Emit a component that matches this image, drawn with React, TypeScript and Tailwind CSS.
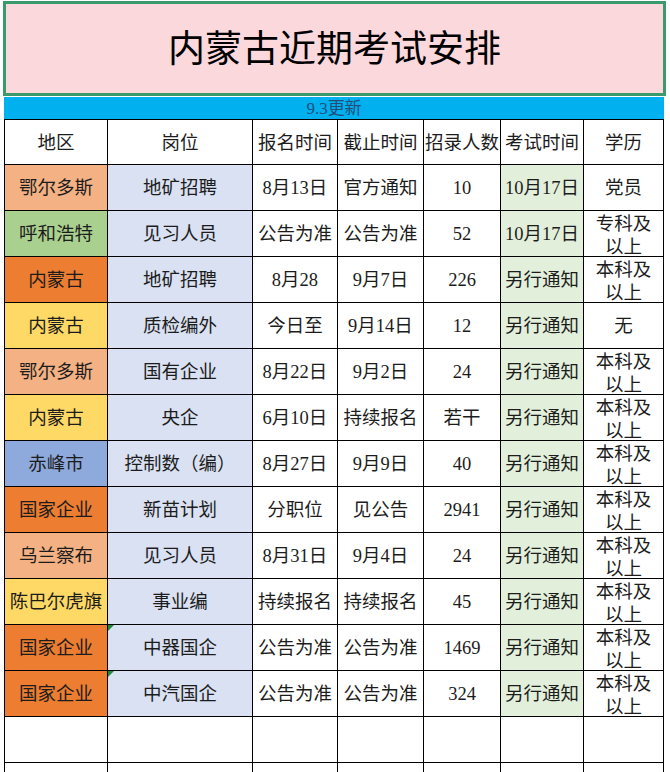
import React from 'react'

type Row = {
  region: string
  regionBg: string
  post: string
  start: string
  end: string
  count: string
  exam: string
  edu: string
  mark?: boolean
}

const rows: Row[] = [
  { region: '鄂尔多斯', regionBg: 'bg-[#f4b183]', post: '地矿招聘', start: '8月13日', end: '官方通知', count: '10', exam: '10月17日', edu: '党员' },
  { region: '呼和浩特', regionBg: 'bg-[#a9d08e]', post: '见习人员', start: '公告为准', end: '公告为准', count: '52', exam: '10月17日', edu: '专科及\n以上' },
  { region: '内蒙古', regionBg: 'bg-[#ed7d31]', post: '地矿招聘', start: '8月28', end: '9月7日', count: '226', exam: '另行通知', edu: '本科及\n以上' },
  { region: '内蒙古', regionBg: 'bg-[#ffd966]', post: '质检编外', start: '今日至', end: '9月14日', count: '12', exam: '另行通知', edu: '无' },
  { region: '鄂尔多斯', regionBg: 'bg-[#f4b183]', post: '国有企业', start: '8月22日', end: '9月2日', count: '24', exam: '另行通知', edu: '本科及\n以上' },
  { region: '内蒙古', regionBg: 'bg-[#ffd966]', post: '央企', start: '6月10日', end: '持续报名', count: '若干', exam: '另行通知', edu: '本科及\n以上' },
  { region: '赤峰市', regionBg: 'bg-[#8ea9db]', post: '控制数（编）', start: '8月27日', end: '9月9日', count: '40', exam: '另行通知', edu: '本科及\n以上' },
  { region: '国家企业', regionBg: 'bg-[#ed7d31]', post: '新苗计划', start: '分职位', end: '见公告', count: '2941', exam: '另行通知', edu: '本科及\n以上' },
  { region: '乌兰察布', regionBg: 'bg-[#f4b183]', post: '见习人员', start: '8月31日', end: '9月4日', count: '24', exam: '另行通知', edu: '本科及\n以上' },
  { region: '陈巴尔虎旗', regionBg: 'bg-[#ffd966]', post: '事业编', start: '持续报名', end: '持续报名', count: '45', exam: '另行通知', edu: '本科及\n以上' },
  { region: '国家企业', regionBg: 'bg-[#ed7d31]', post: '中器国企', start: '公告为准', end: '公告为准', count: '1469', exam: '另行通知', edu: '本科及\n以上', mark: true },
  { region: '国家企业', regionBg: 'bg-[#ed7d31]', post: '中汽国企', start: '公告为准', end: '公告为准', count: '324', exam: '另行通知', edu: '本科及\n以上', mark: true },
]

const cols = 'grid grid-cols-[103px_145px_85px_86px_77px_83px_80px]'
const cell = 'border-r border-b border-black flex justify-center overflow-hidden whitespace-nowrap'
const mid = 'items-center pt-[3px]'

export default function App() {
  return (
    <div
      className="w-[670px] h-[772px] overflow-hidden bg-white text-[#1c1c1c]"
      style={{ fontFamily: '"Liberation Serif", "Noto Sans CJK SC", serif' }}
    >
      {/* title */}
      <div className="ml-[3px] mt-[1px] w-[663px] h-[95px] border-[3px] border-[#3a9a6c] bg-[#fbd8dc] flex items-center justify-center pt-[2px] text-[37px] text-black">
        内蒙古近期考试安排
      </div>
      <div className="ml-[4px] mt-[1px] w-[660px] h-[22px] bg-[#00b0ef] flex items-center justify-center pt-[2px] text-[17px] text-[#1f4e79]">
        9.3更新
      </div>

      {/* table */}
      <div className="ml-[4px] w-[660px] border-l border-t border-black text-[18.5px]">
        <div className={`${cols} h-[45px]`}>
          {['地区', '岗位', '报名时间', '截止时间', '招录人数', '考试时间', '学历'].map((h) => (
            <div key={h} className={`${cell} ${mid}`}>
              {h}
            </div>
          ))}
        </div>

        {rows.map((r, i) => {
          const eduLines = r.edu.split('\n')
          return (
            <div key={i} className={`${cols} h-[46px]`}>
              <div className={`${cell} ${mid} ${r.regionBg}`}>{r.region}</div>
              <div className={`${cell} ${mid} bg-[#d9e1f2] relative`}>
                {r.mark && (
                  <span className="absolute left-0 top-0 w-0 h-0 border-t-[6px] border-r-[6px] border-t-[#1e8a3c] border-r-transparent" />
                )}
                {r.post}
              </div>
              <div className={`${cell} ${mid}`}>{r.start}</div>
              <div className={`${cell} ${mid}`}>{r.end}</div>
              <div className={`${cell} ${mid}`}>{r.count}</div>
              <div className={`${cell} ${mid} bg-[#e2efda]`}>{r.exam}</div>
              {eduLines.length > 1 ? (
                <div className={`${cell} items-start`}>
                  <div className="flex flex-col items-center leading-[23px] pt-[2px]">
                    {eduLines.map((l, k) => (
                      <span key={k}>{l}</span>
                    ))}
                  </div>
                </div>
              ) : (
                <div className={`${cell} ${mid}`}>{r.edu}</div>
              )}
            </div>
          )
        })}

        {[0, 1].map((k) => (
          <div key={k} className={`${cols} h-[46px]`}>
            {[0, 1, 2, 3, 4, 5, 6].map((c) => (
              <div key={c} className={cell} />
            ))}
          </div>
        ))}
      </div>
    </div>
  )
}
